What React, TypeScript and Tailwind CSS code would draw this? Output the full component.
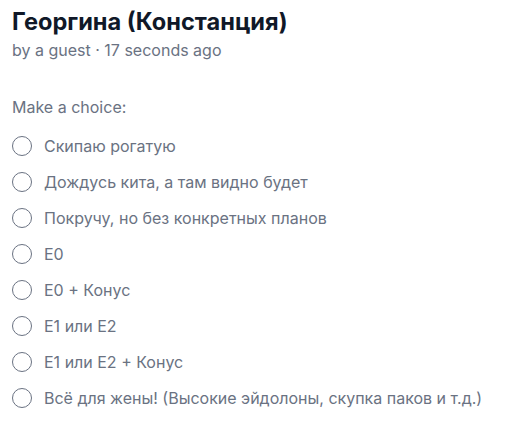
const options = [
  "Скипаю рогатую",
  "Дождусь кита, а там видно будет",
  "Покручу, но без конкретных планов",
  "E0",
  "E0 + Конус",
  "E1 или E2",
  "E1 или E2 + Конус",
  "Всё для жены! (Высокие эйдолоны, скупка паков и т.д.)",
];

export default function App() {
  return (
    <div className="min-h-screen bg-white px-3 pt-1.5 font-['Inter',sans-serif]">
      <h1 className="text-[23.6px] font-bold text-gray-900 leading-8">Георгина (Констанция)</h1>
      <p className="text-base text-gray-500">by a guest · 17 seconds ago</p>
      <div className="mt-[33px]">
        <p className="text-base text-gray-500">Make a choice:</p>
        <ul className="mt-[9px] flex flex-col">
          {options.map((o) => (
            <li key={o} className="flex items-center gap-3 h-9">
              <span className="w-5 h-5 rounded-full border-[1.5px] border-gray-500 shrink-0" />
              <span className="text-base text-gray-500">{o}</span>
            </li>
          ))}
        </ul>
      </div>
    </div>
  );
}
